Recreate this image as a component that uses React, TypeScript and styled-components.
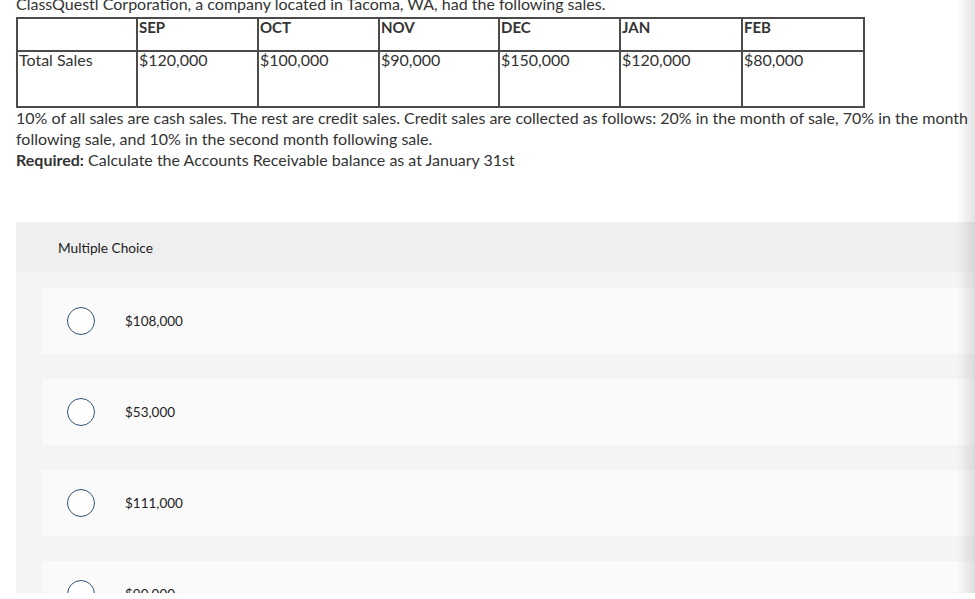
import React from "react";
import styled, { createGlobalStyle } from "styled-components";

const GlobalStyle = createGlobalStyle`
  html, body {
    margin: 0;
    padding: 0;
    background: #ffffff;
  }
  body {
    font-family: Lato, "Liberation Sans", Arial, sans-serif;
    color: #333333;
  }
`;

const Page = styled.div`
  height: 593px;
  overflow: hidden;
  position: relative;
  padding-left: 16px;
`;

const Intro = styled.p`
  margin: -7px 0 0;
  font-size: 16px;
  line-height: 21px;
`;

const SalesTable = styled.table`
  border-collapse: collapse;
  table-layout: fixed;
  width: 848px;
  margin-top: 3px;
`;

const Cell = styled.td<{ $head?: boolean }>`
  border: 2px solid #4b4b4b;
  vertical-align: top;
  padding: 0 1px;
  height: ${(p) => (p.$head ? "31px" : "54px")};
  font-size: ${(p) => (p.$head ? "15px" : "16px")};
  font-weight: ${(p) => (p.$head ? 700 : 400)};
  line-height: 16px;
  color: #333333;
`;

const Question = styled.div`
  width: 956px;
  font-size: 16px;
  line-height: 21px;
  margin-top: -1px;

  b {
    font-weight: 700;
  }
`;

const Panel = styled.section`
  margin-top: 52px;
  background: #f4f4f4;
  padding-bottom: 30px;
`;

const PanelHeader = styled.div`
  height: 50px;
  display: flex;
  align-items: center;
  padding-left: 42px;
  background: #efefef;
  font-size: 13.7px;
  color: #222222;
`;

const Options = styled.div`
  display: flex;
  flex-direction: column;
  gap: 25px;
  padding: 16px 0 0 26px;
`;

const Option = styled.label`
  height: 66px;
  display: flex;
  align-items: center;
  gap: 30px;
  padding-left: 25px;
  background: #fafafa;
  font-size: 13.5px;
  color: #222222;
`;

const Radio = styled.span`
  width: 26px;
  height: 26px;
  border-radius: 50%;
  border: 1.3px solid #2f5378;
  background: #ffffff;
  flex: none;
`;

const EdgeShade = styled.div`
  position: absolute;
  top: 0;
  right: 0;
  width: 18px;
  height: 100%;
  background: linear-gradient(to right, rgba(0, 0, 0, 0), rgba(0, 0, 0, 0.11));
  pointer-events: none;
`;

const months = [
  { m: "SEP", v: "$120,000" },
  { m: "OCT", v: "$100,000" },
  { m: "NOV", v: "$90,000" },
  { m: "DEC", v: "$150,000" },
  { m: "JAN", v: "$120,000" },
  { m: "FEB", v: "$80,000" },
];

const choices = ["$108,000", "$53,000", "$111,000", "$90,000"];

export default function App() {
  return (
    <>
      <GlobalStyle />
      <Page>
        <Intro>ClassQuestl Corporation, a company located in Tacoma, WA, had the following sales.</Intro>
        <SalesTable>
          <colgroup>
            <col style={{ width: 120 }} />
            <col style={{ width: 121 }} />
            <col style={{ width: 121 }} />
            <col style={{ width: 120 }} />
            <col style={{ width: 121 }} />
            <col style={{ width: 122 }} />
            <col style={{ width: 122 }} />
          </colgroup>
          <tbody>
            <tr>
              <Cell $head></Cell>
              {months.map((c) => (
                <Cell $head key={c.m}>{c.m}</Cell>
              ))}
            </tr>
            <tr>
              <Cell>Total Sales</Cell>
              {months.map((c) => (
                <Cell key={c.m}>{c.v}</Cell>
              ))}
            </tr>
          </tbody>
        </SalesTable>
        <Question>
          10% of all sales are cash sales. The rest are credit sales. Credit sales are collected as follows: 20% in the
          month of sale, 70% in the month following sale, and 10% in the second month following sale.
          <br />
          <b>Required:</b> Calculate the Accounts Receivable balance as at January 31st
        </Question>
        <Panel>
          <PanelHeader>Multiple Choice</PanelHeader>
          <Options>
            {choices.map((c) => (
              <Option key={c}>
                <Radio />
                {c}
              </Option>
            ))}
          </Options>
        </Panel>
        <EdgeShade />
      </Page>
    </>
  );
}
